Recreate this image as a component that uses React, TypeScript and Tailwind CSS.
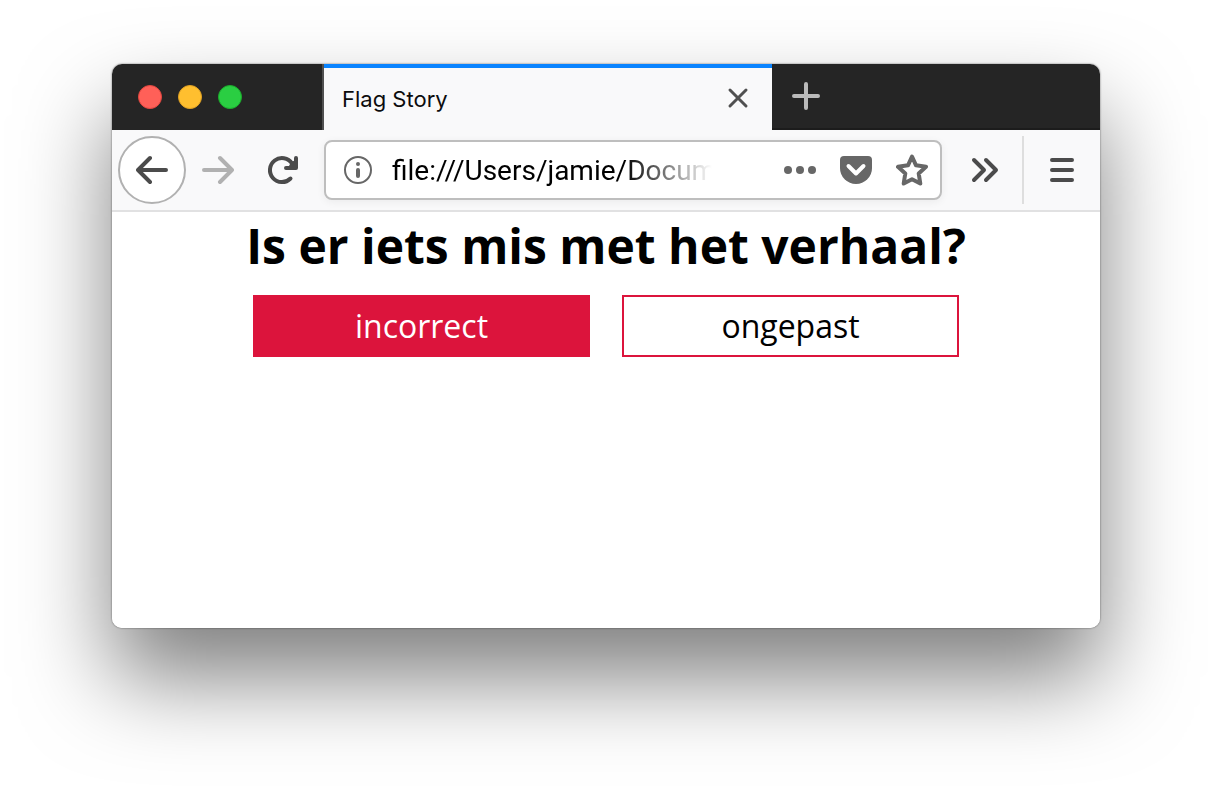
import type { ReactNode } from "react";

function Icon({ children, width = 4 }: { children: ReactNode; width?: number }) {
  return (
    <svg
      viewBox="0 0 32 32"
      className="size-8 shrink-0"
      fill="none"
      stroke="currentColor"
      strokeWidth={width}
      strokeLinecap="round"
      strokeLinejoin="round"
      aria-hidden="true"
    >
      {children}
    </svg>
  );
}

function TabStrip() {
  return (
    <div className="flex h-[66px] bg-[#252525]">
      <div className="flex w-[212px] shrink-0 items-center gap-4 border-r-2 border-r-[#505050] pl-[26px]">
        <button aria-label="Close window" className="size-6 rounded-full border border-[#e2463f] bg-[#ff6058]" />
        <button aria-label="Minimize window" className="size-6 rounded-full border border-[#e0a123] bg-[#ffbf2f]" />
        <button aria-label="Zoom window" className="size-6 rounded-full border border-[#1bac2c] bg-[#2ace42]" />
      </div>
      <div className="flex w-[448px] min-w-0 items-center justify-between border-t-4 border-t-[#0a84ff] bg-[#f9f9fa] px-[18px]">
        <span className="text-[22px] leading-7 text-[#0c0c0d]">Flag Story</span>
        <button aria-label="Close tab" className="text-[#505050]">
          <Icon width={3}>
            <path d="M8 7l16 16M24 7L8 23" />
          </Icon>
        </button>
      </div>
      <div className="flex flex-1 items-center border-b-2 border-b-[#1c1c1c] pl-[18px]">
        <button aria-label="New tab" className="text-[#bababa]">
          <Icon>
            <path d="M16 4v24M4 16h24" />
          </Icon>
        </button>
      </div>
    </div>
  );
}

function AddressBar() {
  return (
    <div className="ml-[10px] flex h-[60px] min-w-0 flex-1 items-center rounded-lg border-2 border-[#bebebe] bg-white pl-4 text-[#676767] shadow-[0_2px_8px_rgba(0,0,0,0.06)]">
      <button aria-label="Site information">
        <Icon width={2}>
          <circle cx="16" cy="16" r="13" />
          <circle cx="16" cy="10" r="2" fill="currentColor" stroke="none" />
          <path d="M16 16v6" strokeWidth="4" />
        </Icon>
      </button>
      <input
        aria-label="Address"
        defaultValue="file:///Users/jamie/Docum"
        className="mr-[60px] ml-[18px] h-10 min-w-0 flex-1 bg-transparent pt-0.5 font-['Roboto','Liberation_Sans',sans-serif] text-[28px] text-black outline-none [mask-image:linear-gradient(to_left,transparent,black_88px)]"
      />
      <button aria-label="Page actions" className="flex w-14 justify-center">
        <Icon>
          <g fill="currentColor" stroke="none">
            <circle cx="4" cy="16" r="4" />
            <circle cx="16" cy="16" r="4" />
            <circle cx="28" cy="16" r="4" />
          </g>
        </Icon>
      </button>
      <button aria-label="Save to Pocket" className="flex w-14 justify-center">
        <Icon>
          <path d="M4 2h24a4 4 0 0 1 4 4v8a16 16 0 0 1-32 0V6a4 4 0 0 1 4-4z" fill="currentColor" stroke="none" />
          <path d="M8.500 12l7.500 7.500 7.500-7.500" stroke="white" />
        </Icon>
      </button>
      <button aria-label="Bookmark this page" className="flex w-14 justify-center">
        <Icon>
          <path d="M16 2.500l4 8.800 10 1.500-7.300 6.600 1.600 10.100L16 25.300l-8.300 4.200 1.600-10.100L2 12.800l10-1.500z" />
        </Icon>
      </button>
    </div>
  );
}

function Toolbar() {
  return (
    <div className="flex h-[82px] items-center border-b-2 border-b-[#e1e1e2] bg-[#f9f9fa] pl-[6px] text-[#4b4b4b]">
      <button
        aria-label="Back"
        className="flex size-[68px] shrink-0 items-center justify-center rounded-full border-2 border-[#b1b1b1] bg-white"
      >
        <Icon>
          <path d="M14 4L2 16l12 12M2 16h28" />
        </Icon>
      </button>
      <button aria-label="Forward" disabled className="flex w-16 shrink-0 justify-center text-[#b1b1b1]">
        <Icon>
          <path d="M18 4l12 12-12 12M30 16H2" />
        </Icon>
      </button>
      <button aria-label="Reload" className="flex w-16 shrink-0 justify-center">
        <Icon>
          <path d="M24.500 24.500A12 12 0 1 1 26 9.500" />
          <path d="M30 4v10H20" />
          <path d="M25 8l5-2v8h-8z" fill="currentColor" stroke="none" />
        </Icon>
      </button>
      <AddressBar />
      <button aria-label="More tools" className="ml-1 flex w-[76px] shrink-0 justify-center">
        <Icon>
          <path d="M6 6l10 10L6 26M18 6l10 10-10 10" />
        </Icon>
      </button>
      <div className="h-[68px] w-[2px] bg-[#dedede]" />
      <button aria-label="Open menu" className="flex w-[76px] shrink-0 justify-center">
        <Icon>
          <path d="M6 6h20M6 16h20M6 26h20" />
        </Icon>
      </button>
    </div>
  );
}

export default function App() {
  return (
    <div className="min-h-screen bg-white px-28 pt-16 pb-40 font-['Inter','Liberation_Sans',sans-serif]">
      <div className="rounded-[10px] shadow-[0_0_2px_rgba(0,0,0,0.6),0_50px_90px_rgba(0,0,0,0.5)]">
        <div className="flex min-h-[564px] flex-col overflow-hidden rounded-[10px] bg-white">
          <TabStrip />
          <Toolbar />
          <main className="flex flex-1 flex-col items-center font-['Open_Sans','Noto_Sans',sans-serif] text-black">
            <h1 className="text-center text-[48px] leading-[68px] font-bold">Is er iets mis met het verhaal?</h1>
            <div className="mt-[15px] flex gap-8 text-[32px] leading-[58px]">
              <button className="w-[337px] border-2 border-[#dc143c] bg-[#dc143c] text-white">incorrect</button>
              <button className="w-[337px] border-2 border-[#dc143c] bg-white">ongepast</button>
            </div>
          </main>
        </div>
      </div>
    </div>
  );
}
